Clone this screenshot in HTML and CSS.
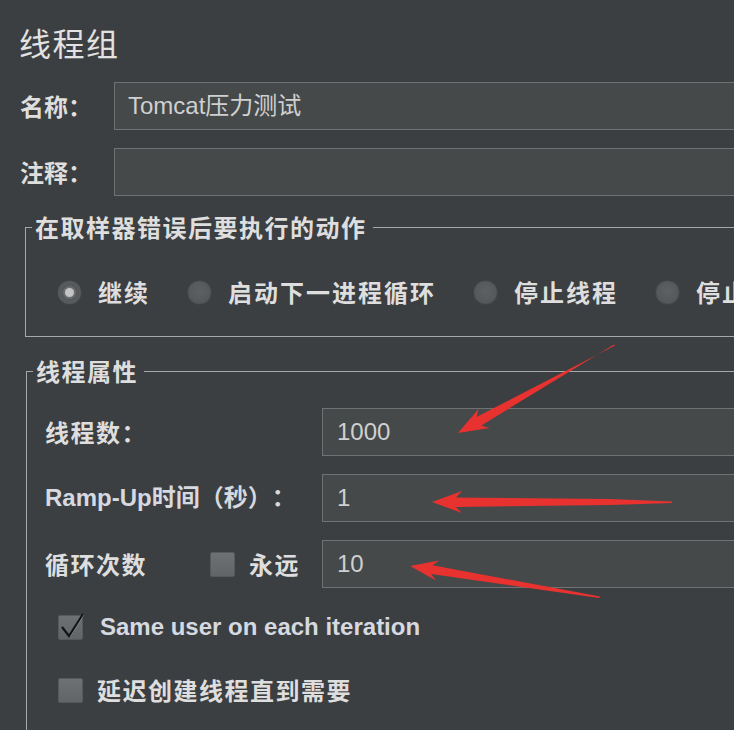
FILE: index.html
```html
<!DOCTYPE html>
<html lang="zh">
<head>
<meta charset="utf-8">
<title>线程组</title>
<link rel="stylesheet" href="styles.css">
</head>
<body>
<div class="page">
  <h1 class="title">线程组</h1>
  <div class="form-row">
    <span class="lbl">名称：</span>
    <div class="field">Tomcat压力测试</div>
  </div>
  <div class="form-row">
    <span class="lbl">注释：</span>
    <div class="field"></div>
  </div>

  <fieldset class="group group-action">
    <legend>在取样器错误后要执行的动作</legend>
    <div class="radios">
      <span class="radio-item"><span class="radio on"></span><span class="rlabel">继续</span></span>
      <span class="radio-item"><span class="radio"></span><span class="rlabel">启动下一进程循环</span></span>
      <span class="radio-item"><span class="radio"></span><span class="rlabel">停止线程</span></span>
      <span class="radio-item"><span class="radio"></span><span class="rlabel">停止测试</span></span>
    </div>
  </fieldset>

  <fieldset class="group group-props">
    <legend>线程属性</legend>
    <div class="props">
      <span class="plbl">线程数：</span>
      <div class="field num">1000</div>
      <span class="plbl latin">Ramp-Up时间（秒）：</span>
      <div class="field num">1</div>
      <span class="plbl loop"><span class="loop-text">循环次数</span><span class="check"></span><span class="forever">永远</span></span>
      <div class="field num">10</div>
    </div>
    <div class="check-row first">
      <span class="check checked"><svg class="tick" width="26" height="30" viewBox="0 0 26 30"><path d="M3 15 L10 24 L24 2" fill="none" stroke="#e8e8e8" stroke-width="1" opacity="0.5" transform="translate(0.8 0.8)"/><path d="M3 15 L10 24 L24 2" fill="none" stroke="#151515" stroke-width="2.2" stroke-linejoin="miter"/></svg></span>
      <span class="clabel latin">Same user on each iteration</span>
    </div>
    <div class="check-row second">
      <span class="check"></span>
      <span class="clabel">延迟创建线程直到需要</span>
    </div>
  </fieldset>

  <svg class="arrows" width="734" height="730" viewBox="0 0 734 730">
    <polygon points="458,433 489.5,427.9 481.3,425.4 614,344.5 615,345.5 476.5,417 478.7,408.7" fill="#e8322f"/>
    <polygon points="432,502 462,513 456,507 610,505 672,503 672,501.5 610,499 456,497.5 462,491" fill="#e8322f"/>
    <polygon points="410,566 436,580.4 431.1,574 599,598 600,596.5 432.3,565.2 439.2,560.6" fill="#e8322f"/>
  </svg>
</div>
</body>
</html>
```

FILE: styles.css
```css
html, body {
  margin: 0;
  padding: 0;
  overflow: hidden;
}

body {
  background: #3c3f41;
  width: 734px;
  height: 730px;
  font-family: "Liberation Sans", "Noto Sans CJK SC", sans-serif;
  color: #d8d8d8;
  text-spacing-trim: space-all;
}

.page {
  position: relative;
  width: 900px;
  height: 730px;
  padding-left: 20px;
  box-sizing: border-box;
}

.title {
  margin: 0 0 0 -1px;
  padding-top: 22px;
  font-family: "Noto Sans CJK SC", sans-serif;
  font-size: 32px;
  line-height: 40px;
  font-weight: 400;
  color: #e2e2e2;
  letter-spacing: 1.5px;
}

.form-row {
  display: flex;
  align-items: center;
  margin-top: 20px;
}

.form-row + .form-row {
  margin-top: 18px;
}

.lbl {
  width: 94px;
  flex: none;
  font-family: "Noto Sans CJK SC", sans-serif;
  font-size: 24px;
  font-weight: 700;
  line-height: 30px;
  color: #dedede;
}

.field {
  flex: none;
  width: 700px;
  height: 48px;
  box-sizing: border-box;
  border: 1px solid #6f7274;
  background: #45494a;
  padding-left: 13px;
  font-size: 24px;
  line-height: 46px;
  color: #d0d0d0;
}

.group {
  margin: 16px 0 0 5px;
  padding: 0;
  border: 1px solid #a6a8a9;
  width: 800px;
  min-width: 0;
  box-sizing: border-box;
}

.group legend {
  margin-left: 6px;
  padding: 0 6px 0 3px;
  font-family: "Noto Sans CJK SC", sans-serif;
  font-size: 24px;
  font-weight: 700;
  line-height: 30px;
  letter-spacing: 1.5px;
  color: #dedede;
}

.radios {
  display: flex;
  align-items: center;
  height: 36px;
  margin: 32px 0 26px;
  padding-left: 31px;
}

.radio-item {
  display: flex;
  align-items: center;
  gap: 16px;
  margin-right: 37px;
  flex: none;
}

.radio {
  width: 25px;
  height: 25px;
  border-radius: 50%;
  box-sizing: border-box;
  background: radial-gradient(circle at 50% 45%, #5e6164 0%, #56595c 60%, #4b4e50 100%);
  border: 1px solid #434547;
  position: relative;
}

.radio.on {
  background: radial-gradient(circle, #4e5153 0%, #595c5f 70%, #4a4d50 100%);
}

.radio.on::after {
  content: "";
  position: absolute;
  left: 50%;
  top: 50%;
  width: 9px;
  height: 9px;
  margin: -4.5px 0 0 -4.5px;
  border-radius: 50%;
  background: #c4c4c4;
  box-shadow: 0 0 0 2px #6a6d70;
}

.rlabel {
  font-family: "Noto Sans CJK SC", sans-serif;
  font-size: 24px;
  font-weight: 700;
  line-height: 30px;
  letter-spacing: 2px;
  color: #dedede;
  white-space: nowrap;
}

.group-props {
  margin: 19px 0 0 6px;
  padding-bottom: 60px;
}

.props {
  display: grid;
  grid-template-columns: 277px 600px;
  row-gap: 18px;
  align-items: center;
  margin-top: 22px;
  padding-left: 18px;
}

.props .field {
  width: 600px;
  padding-left: 14px;
}

.plbl {
  font-family: "Noto Sans CJK SC", sans-serif;
  font-size: 24px;
  font-weight: 700;
  line-height: 30px;
  letter-spacing: 1.5px;
  color: #dedede;
  white-space: nowrap;
}

.latin {
  font-family: "Liberation Sans", "Noto Sans CJK SC", sans-serif;
  letter-spacing: 0;
  color: #d6dae0;
}

.loop {
  display: flex;
  align-items: center;
}

.loop-text {
  width: 165px;
}

.forever {
  margin-left: 14px;
}

.check {
  flex: none;
  width: 25px;
  height: 25px;
  box-sizing: border-box;
  border-radius: 2px;
  background: linear-gradient(#6e7173, #626567);
  border: 1px solid #57595b;
  position: relative;
  display: inline-block;
}

.tick {
  position: absolute;
  left: 0;
  top: -4px;
  overflow: visible;
}

.check-row {
  display: flex;
  align-items: center;
  gap: 17px;
  height: 40px;
  padding-left: 31px;
}

.check-row.first {
  margin-top: 19px;
}

.check-row.second {
  margin-top: 23px;
  gap: 14px;
}

.clabel {
  font-family: "Noto Sans CJK SC", sans-serif;
  font-size: 24px;
  font-weight: 700;
  line-height: 30px;
  letter-spacing: 1.5px;
  color: #dedede;
  white-space: nowrap;
}

.clabel.latin {
  font-family: "Liberation Sans", sans-serif;
  letter-spacing: 0;
  color: #d6dae0;
}

.arrows {
  position: absolute;
  left: 0;
  top: 0;
  pointer-events: none;
}
```
